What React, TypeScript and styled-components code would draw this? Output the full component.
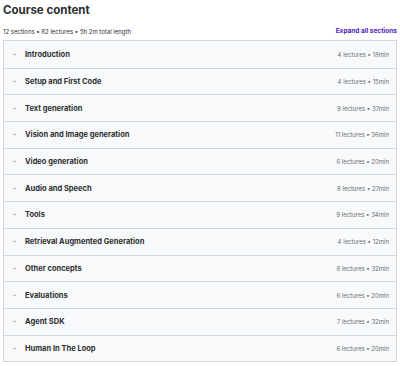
import * as React from "react";
import styled, { createGlobalStyle } from "styled-components";

const GlobalStyle = createGlobalStyle`
  html, body {
    margin: 0;
    padding: 0;
    background: #ffffff;
  }
  body {
    font-family: Inter, "Noto Sans", "Liberation Sans", sans-serif;
    color: #2d2f31;
  }
`;

const Page = styled("div")`
  padding: 2px 3px 0 3px;
  width: 394px;
`;

const Title = styled("h2")`
  margin: 0;
  font-size: 11.5px;
  font-weight: 700;
  line-height: 16px;
  color: #2d2f31;
`;

const SubBar = styled("div")`
  display: flex;
  align-items: center;
  justify-content: space-between;
  margin-top: 7px;
  margin-bottom: 3px;
  height: 12px;
`;

const Summary = styled("span")`
  font-size: 6px;
  color: #2d2f31;
`;

const ExpandLink = styled("button")`
  border: none;
  background: none;
  padding: 0;
  font-family: inherit;
  font-size: 6.5px;
  font-weight: 700;
  color: #5022c3;
  cursor: pointer;
`;

const Panel = styled("div")`
  border: 1px solid #d1d7dc;
  background: #f7f9fa;
`;

const Row = styled("div")`
  display: flex;
  align-items: center;
  height: 26.7px;
  padding: 0 7px 0 8px;
  box-sizing: border-box;
  & + & {
    border-top: 1px solid #d1d7dc;
  }
`;

const Chevron = styled("svg")`
  width: 5px;
  height: 5px;
  margin-right: 8px;
  flex: none;
`;

const SectionName = styled("span")`
  flex: 1;
  font-size: 7.5px;
  font-weight: 700;
  color: #2d2f31;
`;

const Meta = styled("span")`
  font-size: 6px;
  color: #6a6f73;
`;

const sections: [string, number, string][] = [
  ["Introduction", 4, "18min"],
  ["Setup and First Code", 4, "15min"],
  ["Text generation", 9, "37min"],
  ["Vision and Image generation", 11, "36min"],
  ["Video generation", 6, "20min"],
  ["Audio and Speech", 8, "27min"],
  ["Tools", 9, "34min"],
  ["Retrieval Augmented Generation", 4, "12min"],
  ["Other concepts", 8, "32min"],
  ["Evaluations", 6, "20min"],
  ["Agent SDK", 7, "32min"],
  ["Human In The Loop", 6, "20min"],
];

export default function App() {
  return (
    <Page>
      <GlobalStyle />
      <Title>Course content</Title>
      <SubBar>
        <Summary>12 sections • 82 lectures • 5h 2m total length</Summary>
        <ExpandLink>Expand all sections</ExpandLink>
      </SubBar>
      <Panel>
        {sections.map(([name, count, len]) => (
          <Row key={name}>
            <Chevron viewBox="0 0 24 24" fill="none" stroke="#6a6f73" strokeWidth={3} strokeLinecap="round" strokeLinejoin="round">
              <path d="M6 9l6 6 6-6" />
            </Chevron>
            <SectionName>{name}</SectionName>
            <Meta>
              {count} lectures • {len}
            </Meta>
          </Row>
        ))}
      </Panel>
    </Page>
  );
}
